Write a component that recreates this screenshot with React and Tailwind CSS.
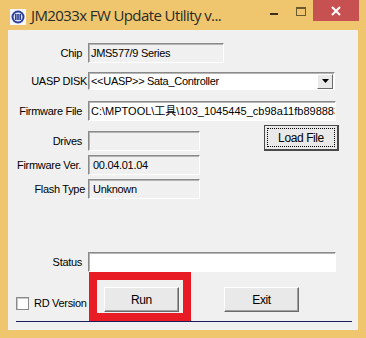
import React from "react";

const LF = { fontFamily: '"Liberation Sans", Arial, sans-serif' };

function Sunken({ className = "", children, white = false }) {
  return (
    <div
      className={`h-[20px] border border-t-[#8a8a8a] border-l-[#8a8a8a] border-r-white border-b-white shadow-[inset_1px_1px_0_0_#b5b5b5] flex items-center pl-[2px] overflow-hidden whitespace-nowrap ${white ? "bg-white" : "bg-[#f0f0f0]"} ${className}`}
    >
      {children}
    </div>
  );
}

function Label({ children, pr = "pr-[6px]" }) {
  return (
    <div className={`w-[80px] shrink-0 text-right ${pr} whitespace-nowrap`}>{children}</div>
  );
}

function Btn({ children, className = "" }) {
  return (
    <div
      className={`w-[75px] h-[25px] bg-[#e9e9e9] border border-t-white border-l-white border-r-[#6a6a6a] border-b-[#6a6a6a] shadow-[inset_-1px_-1px_0_0_#a0a0a0] flex items-center justify-center text-[12px] tracking-[-0.4px] text-black ${className}`}
    >
      {children}
    </div>
  );
}

export default function App() {
  return (
    <div className="w-[366px] h-[338px] bg-[#efc66d] overflow-hidden" style={LF}>
      {/* title bar */}
      <div className="h-[30px] flex items-start">
        <div className="ml-[10px] mt-[9px] w-[16px] h-[16px]">
          <svg width="16" height="16" viewBox="0 0 16 16">
            <rect x="0" y="0" width="16" height="16" fill="#f4f6fb" />
            <circle cx="8" cy="8" r="6.5" fill="#2c3f9a" />
            <circle cx="8" cy="8" r="4.5" fill="#dfe6f7" />
            <rect x="5" y="5" width="1.6" height="6" fill="#2c3f9a" />
            <rect x="7.2" y="5" width="1.6" height="6" fill="#2c3f9a" />
            <rect x="9.4" y="5" width="1.6" height="6" fill="#2c3f9a" />
          </svg>
        </div>
        <div
          className="ml-[5px] mt-[4px] text-[15px] leading-[22px] tracking-[-0.6px] text-[#2a2a2a] whitespace-nowrap"
          style={{ fontFamily: '"Open Sans", "Noto Sans", sans-serif' }}
        >
          JM2033x FW Update Utility v...
        </div>
        <div className="flex-1" />
        <div className="mt-[13px] w-[8px] h-[2px] bg-[#3a3020]" />
        <div className="ml-[18px] mt-[7px] w-[10px] h-[9px] border border-[#6b5a30] border-t-2" />
        <div className="ml-[7px] mr-[7px] w-[46px] h-[21px] bg-[#c75050] flex items-center justify-center">
          <svg width="10" height="10" viewBox="0 0 10 10">
            <path d="M1 1 L9 9 M9 1 L1 9" stroke="white" strokeWidth="2" />
          </svg>
        </div>
      </div>

      {/* client */}
      <div className="ml-[8px] w-[350px] h-[300px] bg-[#f0f0f0] flex flex-col text-[11px] tracking-[-0.3px] text-black">
        {/* Chip */}
        <div className="mt-[13px] flex items-center h-[20px]">
          <Label>Chip</Label>
          <Sunken className="w-[136px]">JMS577/9 Series</Sunken>
        </div>
        {/* UASP */}
        <div className="mt-[9px] flex items-center h-[18px]">
          <Label pr="pr-[1px]">UASP DISK</Label>
          <div className="w-[247px] h-[18px] bg-white border border-t-[#8a8a8a] border-l-[#8a8a8a] border-r-white border-b-white shadow-[inset_1px_1px_0_0_#b5b5b5] flex items-center pl-[2px] pr-[1px]">
            <div className="flex-1 whitespace-nowrap">&lt;&lt;UASP&gt;&gt; Sata_Controller</div>
            <div className="w-[16px] h-[15px] bg-[#e9e9e9] border border-t-white border-l-white border-r-[#6a6a6a] border-b-[#6a6a6a] flex items-center justify-center">
              <svg width="7" height="4" viewBox="0 0 7 4">
                <path d="M0 0 H7 L3.5 4 Z" fill="black" />
              </svg>
            </div>
          </div>
        </div>
        {/* Firmware File */}
        <div className="mt-[11px] flex items-center h-[20px]">
          <Label>Firmware File</Label>
          <Sunken white className="w-[248px] tracking-normal">
            <span style={{ fontFamily: '"Liberation Sans", "Noto Sans CJK SC", sans-serif' }}>
              C:\MPTOOL\工具\103_1045445_cb98a11fb8988834f
            </span>
          </Sunken>
        </div>
        {/* Drives / Ver / Flash + Load File */}
        <div className="flex items-start">
          <div className="flex flex-col">
            <div className="mt-[10px] flex items-center h-[20px]">
              <Label>Drives</Label>
              <Sunken className="w-[112px]" />
            </div>
            <div className="mt-[4px] flex items-center h-[20px]">
              <Label pr="pr-[7px]">Firmware Ver.</Label>
              <Sunken className="w-[112px] pl-[4px]">00.04.01.04</Sunken>
            </div>
            <div className="mt-[4px] flex items-center h-[20px]">
              <Label pr="pr-[3px]">Flash Type</Label>
              <Sunken className="w-[112px] pl-[4px]">Unknown</Sunken>
            </div>
          </div>
          <div className="ml-[64px] mt-[4px] w-[75px] h-[26px] border border-[#4a4a4a] border-r-2 border-b-2 bg-[#e9e9e9] p-[2px]">
            <div className="w-full h-full border border-dotted border-black flex items-center justify-center text-[12px] tracking-[-0.4px]">
              Load File
            </div>
          </div>
        </div>
        {/* Status */}
        <div className="mt-[53px] flex items-center h-[20px]">
          <Label>Status</Label>
          <Sunken white className="w-[248px]" />
        </div>
        {/* bottom row */}
        <div className="flex items-start">
          <div className="ml-[8px] mt-[25px] w-[13px] h-[13px] bg-white border border-[#8a8a8a] shadow-[inset_1px_1px_0_0_#c8c8c8]" />
          <div className="ml-[5px] mt-[23px] h-[16px] leading-[16px] whitespace-nowrap w-[55px]">RD Version</div>
          <div className="w-[102px] h-[49px] border-[8px] border-[#e81c24] pl-[7px] pt-[7px]">
            <Btn>Run</Btn>
          </div>
          <Btn className="ml-[33px] mt-[15px]">Exit</Btn>
        </div>
        <div className="ml-[8px] w-[336px] h-[1px] bg-[#1c1c5e]" />
      </div>
    </div>
  );
}
